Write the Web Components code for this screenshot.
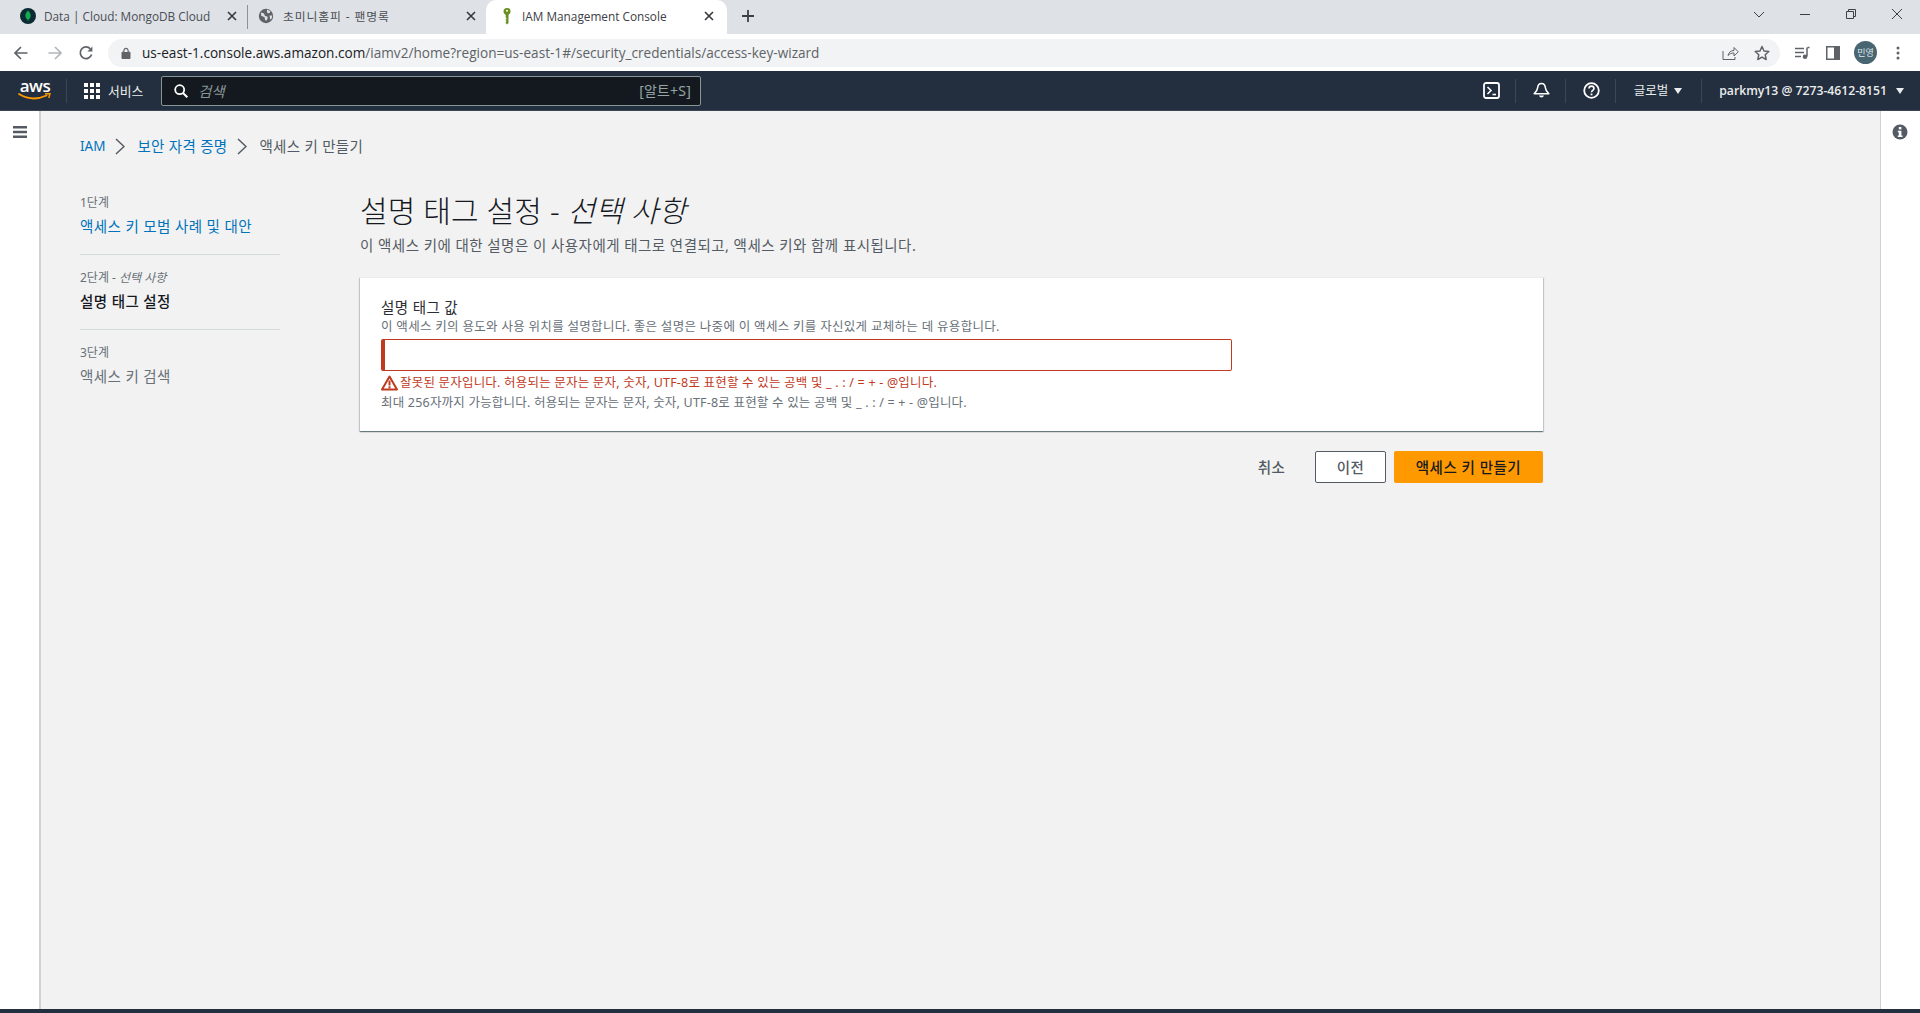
<!DOCTYPE html>
<html lang="ko"><head><meta charset="utf-8"><title>IAM Management Console</title>
<style>
html,body{margin:0;padding:0;height:1013px;overflow:hidden;background:#fff}
body{font-family:"Noto Sans CJK KR","Noto Sans",sans-serif;color:#16191f}
</style></head><body>
<iam-app></iam-app>
<script>
const KR='"Noto Sans","Noto Sans CJK KR",sans-serif';
function def(name,css,html){
  customElements.define(name,class extends HTMLElement{
    constructor(){super();const s=this.attachShadow({mode:'open'});s.innerHTML='<style>'+css+'</style>'+html;}
  });
}
def('browser-tab',`
:host{display:flex;align-items:center;height:34px;box-sizing:border-box;font:11.8px/16px "Open Sans","Noto Sans CJK KR",sans-serif;color:#4a4d52}
:host([active]){background:#fff;border-radius:10px 10px 0 0;color:#3c4043}
.ico{width:18px;height:18px;display:flex;align-items:center;justify-content:center;flex:none}
.t{flex:1;white-space:nowrap;overflow:hidden;margin-left:var(--g,2px)}
.x{flex:none;width:12px;height:12px}
`,`<span class="ico"><slot name="icon"></slot></span><span class="t"><slot></slot></span>
<svg class="x" viewBox="0 0 12 12"><path d="M2 2l8 8M10 2l-8 8" stroke="#33373b" stroke-width="1.6" fill="none"/></svg>`);

def('tab-strip',`
:host{display:flex;align-items:stretch;height:34px;background:#dee1e6}
browser-tab{flex:none}
.sep{width:1px;height:24px;background:#8e9196;align-self:center;flex:none}
.plus{width:16px;height:16px;margin:0 0 2px 13px;align-self:center}
.sp{flex:1}
.win{display:flex;align-items:center;flex:none;padding-bottom:6px}
.win svg{width:12px;height:12px;display:block}
`,`
<browser-tab style="width:247px;padding:0 9px 2px 19px;--g:7px"><svg slot="icon" width="18" height="18" viewBox="0 0 18 18"><circle cx="9" cy="9" r="8" fill="#0b2b33"/><path d="M9 3.4c2 2 2.9 3.8 2.6 5.9-.2 1.500-1.200 2.800-2.300 3.500v1.500h-.6v-1.500C7.500 12.100 6.600 10.800 6.400 9.300 6.100 7.200 7 5.400 9 3.400z" fill="#13aa52"/></svg>Data | Cloud: MongoDB Cloud</browser-tab>
<span class="sep"></span>
<browser-tab style="width:238px;padding:0 9px 2px 9px;--g:8px;letter-spacing:.9px"><svg slot="icon" width="16" height="16" viewBox="0 0 16 16"><circle cx="8" cy="8" r="7.200" fill="#5f6368"/><path d="M3 4.500l3 1 1 2.500 2.400.6.300 2-1.300 2-1.300-.4-.5-3-3.400-1.500zM9 1.500l3.500 1.800-1 1.700-2 .3-.5-1.500zM11.500 7.500h2.800l-.6 3-1.500 1.200z" fill="#dee1e6"/></svg>초미니홈피 - 팬명록</browser-tab>
<browser-tab active style="width:241px;padding:0 12px 2px 12px;--g:6px"><svg slot="icon" width="12" height="18" viewBox="0 0 12 18"><path d="M6 1a3.500 3.500 0 0 1 3.500 3.500c0 1.500-.9 2.700-2 3.200V16L6 17.500 4.700 16v-1.200l1-.8-1-.8v-1l1-.8-1-.8V7.700c-1.200-.5-2.200-1.700-2.200-3.200A3.500 3.500 0 0 1 6 1z" fill="#6c8f21"/><circle cx="6" cy="3.700" r="1" fill="#fff"/></svg>IAM Management Console</browser-tab>
<svg class="plus" viewBox="0 0 16 16"><path d="M8 2v12M2 8h12" stroke="#3c4043" stroke-width="1.800" fill="none"/></svg>
<span class="sp"></span>
<div class="win">
<svg viewBox="0 0 12 12" style="margin-right:34px"><path d="M1 4l5 5 5-5" stroke="#3c4043" fill="none"/></svg>
<svg viewBox="0 0 12 12" style="margin-right:34px"><path d="M1 6.500h10" stroke="#3c4043" fill="none"/></svg>
<svg viewBox="0 0 12 12" style="margin-right:34px"><path d="M1.500 3.500h7v7h-7zM3.500 3.500v-2h7v7h-2" stroke="#3c4043" fill="none"/></svg>
<svg viewBox="0 0 12 12" style="margin-right:17px"><path d="M1 1l10 10M11 1L1 11" stroke="#3c4043" fill="none"/></svg>
</div>`);

def('browser-toolbar',`
:host{display:flex;align-items:center;height:37px;background:#fff;box-sizing:border-box}
svg{display:block;flex:none}
.pill{flex:none;width:1672px;margin-left:14px;height:28px;border-radius:14px;background:#f1f3f4;display:flex;align-items:center;box-sizing:border-box;padding:0 10px 0 13px}
.url{flex:1;margin-left:11px;font:13.6px/18px "Open Sans",sans-serif;color:#202124;white-space:nowrap}
.url span{color:#5f6368}
.av{width:23px;height:23px;border-radius:50%;background:#4a6572;color:#dfe7ea;font:9px/23px "Noto Sans CJK KR",sans-serif;text-align:center;flex:none}
`,`
<svg width="16" height="16" viewBox="0 0 16 16" style="margin-left:13px"><path d="M14.500 8H2M8 2L2 8l6 6" stroke="#5f6368" stroke-width="1.700" fill="none"/></svg>
<svg width="16" height="16" viewBox="0 0 16 16" style="margin-left:18px"><path d="M1.500 8H14M8 2l6 6-6 6" stroke="#b4b6b9" stroke-width="1.700" fill="none"/></svg>
<svg width="16" height="16" viewBox="0 0 16 16" style="margin-left:15px"><path d="M13.600 9.500A5.800 5.800 0 1 1 12.300 3.800" stroke="#5f6368" stroke-width="1.700" fill="none"/><path d="M14.400 1.400v5h-5z" fill="#5f6368"/></svg>
<div class="pill">
<svg width="10" height="12" viewBox="0 0 10 12"><path d="M1 5.200h8V11.500H1zM2.800 5.200V3.400a2.200 2.200 0 0 1 4.400 0v1.800" fill="#5f6368" stroke="#5f6368" stroke-width="1"/><path d="M3.500 5V3.400a1.500 1.500 0 0 1 3 0V5z" fill="#f1f3f4"/></svg>
<span class="url">us-east-1.console.aws.amazon.com<span>/iamv2/home?region=us-east-1#/security_credentials/access-key-wizard</span></span>
<svg width="17" height="16" viewBox="0 0 17 16"><path d="M1 6v8.500h12V12M6 10.500c.6-3 2.800-5 6-5V2.500l4.300 4.300L12 11V8c-2.500 0-4.500.8-6 2.500z" stroke="#5f6368" stroke-width="1" fill="none"/></svg>
<svg width="16" height="16" viewBox="0 0 16 16" style="margin-left:15px"><path d="M8 1.500l2 4.500 4.800.5-3.600 3.200 1 4.800L8 12.100l-4.200 2.400 1-4.800L1.200 6.500 6 6z" stroke="#5f6368" stroke-width="1.500" fill="none" stroke-linejoin="round"/></svg>
</div>
<svg width="16" height="14" viewBox="0 0 16 14" style="margin-left:14px"><path d="M1 2.500h9M1 6.500h9M1 10.500h6" stroke="#5f6368" stroke-width="1.400"/><path d="M13.500 1.500h2M13 1.500v9" stroke="#5f6368" stroke-width="1.500" fill="none"/><circle cx="11" cy="10.800" r="2.300" fill="#5f6368"/></svg>
<svg width="14" height="14" viewBox="0 0 14 14" style="margin-left:16px"><path d="M0 0h14v14H0z" fill="#5f6368"/><path d="M1.500 1.500H8v11H1.500z" fill="#fff"/></svg>
<span class="av" style="margin-left:14px">민영</span>
<svg width="4" height="14" viewBox="0 0 4 14" style="margin-left:19px"><circle cx="2" cy="2" r="1.500" fill="#5f6368"/><circle cx="2" cy="7" r="1.500" fill="#5f6368"/><circle cx="2" cy="12" r="1.500" fill="#5f6368"/></svg>`);

def('nav-divider',`:host{display:block;width:1px;height:24px;background:#3a4656;flex:none}`,``);

def('aws-logo',`
:host{display:flex;flex-direction:column;align-items:center;width:34px;flex:none}
span{font:600 17px/12px "Open Sans",sans-serif;color:#fff;letter-spacing:-.5px;height:12px}
svg{display:block;margin-top:1px}
`,`<span>aws</span><svg width="34" height="8" viewBox="0 0 34 8"><path d="M1 1c5 3 10 4.500 15 4.500 4 0 8-1 12.500-3" stroke="#f90" stroke-width="1.800" fill="none" stroke-linecap="round"/><path d="M27 .8l5-.3-1.200 4.500" stroke="#f90" stroke-width="1.400" fill="none"/></svg>`);

def('aws-nav',`
:host{display:flex;align-items:center;height:40px;background:#232f3e;color:#fff;box-sizing:border-box;border-bottom:1px solid #3b4654;font:12px/16px ${KR}}
svg{display:block;flex:none}
.svc{margin-left:8px;font-size:12.800px;color:#eaeded;white-space:nowrap;width:36px}
.search{flex:none;width:540px;height:30px;box-sizing:border-box;margin-left:17px;background:#14191f;border:1px solid #879596;border-radius:2px;display:flex;align-items:center;padding:0 9px 0 12px}
.ph{margin-left:10px;font-style:italic;color:#879596;font-size:14.500px;flex:1}
.hint{color:#95a5a6;font-size:14px;letter-spacing:.2px}
.sp{flex:1}
.reg{font-size:12.500px;color:#eaeded;white-space:nowrap}
.user{font:600 12.200px/16px "Open Sans","Noto Sans CJK KR",sans-serif;color:#eaeded;white-space:nowrap}
.caret{width:0;height:0;border-left:4px solid transparent;border-right:4px solid transparent;border-top:6px solid #eaeded;flex:none}
`,`
<aws-logo style="margin-left:18px"></aws-logo>
<nav-divider style="margin-left:14px"></nav-divider>
<svg width="16" height="16" viewBox="0 0 16 16" style="margin-left:17px"><g fill="#fff"><rect width="4" height="4"/><rect x="6" width="4" height="4"/><rect x="12" width="4" height="4"/><rect y="6" width="4" height="4"/><rect x="6" y="6" width="4" height="4"/><rect x="12" y="6" width="4" height="4"/><rect y="12" width="4" height="4"/><rect x="6" y="12" width="4" height="4"/><rect x="12" y="12" width="4" height="4"/></g></svg>
<span class="svc">서비스</span>
<div class="search"><svg width="14" height="14" viewBox="0 0 14 14"><circle cx="5.700" cy="5.700" r="4.500" stroke="#fff" stroke-width="1.800" fill="none"/><path d="M9 9l4.300 4.300" stroke="#fff" stroke-width="2"/></svg><span class="ph">검색</span><span class="hint">[알트+S]</span></div>
<span class="sp"></span>
<svg width="17" height="17" viewBox="0 0 17 17"><rect x="1" y="1" width="15" height="15" rx="2" stroke="#fff" stroke-width="1.800" fill="none"/><path d="M4.500 5l3.500 3.500L4.500 12" stroke="#fff" stroke-width="1.600" fill="none"/><path d="M9.500 12.500h3.500" stroke="#fff" stroke-width="1.600"/></svg>
<nav-divider style="margin-left:15px"></nav-divider>
<svg width="17" height="18" viewBox="0 0 17 18" style="margin-left:17px"><path d="M8.500 1.500c2.300 0 3.600 1.800 3.800 4 .2 2.500 1.700 4.500 3.500 6.300H1.200C3 10 4.500 8 4.700 5.500c.2-2.200 1.500-4 3.800-4z" stroke="#fff" stroke-width="1.600" fill="none" stroke-linejoin="round"/><path d="M6 13.500a2.600 2.600 0 0 0 5 0z" fill="#fff"/></svg>
<nav-divider style="margin-left:15px"></nav-divider>
<svg width="17" height="17" viewBox="0 0 17 17" style="margin-left:17px"><circle cx="8.500" cy="8.500" r="7.300" stroke="#fff" stroke-width="1.800" fill="none"/><path d="M6 6.500c0-3.200 5-3.200 5 0 0 2-2.500 1.800-2.500 3.800" stroke="#fff" stroke-width="1.600" fill="none"/><rect x="7.600" y="11.500" width="1.800" height="1.800" fill="#fff"/></svg>
<nav-divider style="margin-left:15px"></nav-divider>
<span class="reg" style="margin-left:18px">글로벌</span><span class="caret" style="margin-left:6px"></span>
<nav-divider style="margin-left:19px"></nav-divider>
<span class="user" style="margin-left:17px">parkmy13 @ 7273-4612-8151</span><span class="caret" style="margin-left:9px;margin-right:16px"></span>`);

def('iam-crumbs',`
:host{display:flex;align-items:center;height:20px;font:14.500px/20px ${KR};letter-spacing:.3px;color:#545b64;white-space:nowrap}
a{color:#0073bb;text-decoration:none}
.iam{font-size:13.500px;letter-spacing:0}
svg{display:block;margin:0 12px 0 10px;flex:none}
`,`<a class="iam">IAM</a><svg width="10" height="17" viewBox="0 0 10 17"><path d="M1 1l8 7.500L1 16" stroke="#545b64" stroke-width="1.500" fill="none"/></svg><a>보안 자격 증명</a><svg width="10" height="17" viewBox="0 0 10 17"><path d="M1 1l8 7.500L1 16" stroke="#545b64" stroke-width="1.500" fill="none"/></svg><span>액세스 키 만들기</span>`);

def('wizard-step',`
:host{display:block;box-sizing:border-box;height:75px;padding-top:4px}
:host(:not([last])) .w{border-bottom:1px solid #d5dbdb}
.w{height:61px;box-sizing:border-box}
.n{font-size:12px;line-height:18px;color:#687078;display:block}
.l{font-size:14.500px;letter-spacing:.4px;line-height:20px;margin-top:4px;display:block;color:#687078;white-space:nowrap}
:host([link]) .l{color:#0073bb}
:host([current]) .l{color:#16191f;font-weight:500}
`,`<div class="w"><span class="n"><slot name="n"></slot></span><span class="l"><slot></slot></span></div>`);

def('wizard-steps',`:host{display:block;width:200px;flex:none;font-family:${KR}}`,`<slot></slot>`);

def('iam-button',`
:host{display:inline-flex;align-items:center;justify-content:center;height:32px;box-sizing:border-box;font:500 14.500px/20px ${KR};letter-spacing:.5px;border-radius:2px;white-space:nowrap;color:#545b64}
:host([variant=normal]){border:1px solid #545b64;background:#fff;width:71px}
:host([variant=primary]){background:#f90;color:#16191f;width:149px}
:host([variant=link]){width:29px}
`,`<slot></slot>`);

def('desc-card',`
:host{display:block;background:#fff;height:154px;box-sizing:border-box;padding:20px 21px 0;font-family:${KR};border-top:1px solid #eaeded;box-shadow:0 1px 1px 0 rgba(0,28,36,.4),1px 1px 1px 0 rgba(0,28,36,.15),-1px 1px 1px 0 rgba(0,28,36,.15)}
.lab{font-size:14.500px;letter-spacing:.4px;line-height:18px;color:#2a2e33}
.d{font-size:12.500px;letter-spacing:.3px;line-height:16px;color:#687078;margin-top:3px;white-space:nowrap}
.inp{width:851px;height:32px;box-sizing:border-box;margin-top:4px;border:1px solid #bf3a1e;border-left:4px solid #bf3a1e;border-radius:2px;background:#fff}
.err{display:flex;align-items:center;font-size:12.500px;letter-spacing:.2px;line-height:16px;color:#bf3a1e;margin-top:4px;white-space:nowrap}
.err svg{margin-right:2px;flex:none}
.note{font-size:12.500px;letter-spacing:.2px;line-height:16px;color:#687078;margin-top:4px;white-space:nowrap}
`,`<div class="lab">설명 태그 값</div>
<div class="d">이 액세스 키의 용도와 사용 위치를 설명합니다. 좋은 설명은 나중에 이 액세스 키를 자신있게 교체하는 데 유용합니다.</div>
<div class="inp"></div>
<div class="err"><svg width="17" height="16" viewBox="0 0 17 16"><path d="M8.500 1.500L16 14.500H1z" fill="#fff" stroke="#bf3a1e" stroke-width="2" stroke-linejoin="round"/><rect x="7.500" y="5.500" width="2" height="5" fill="#bf3a1e"/><rect x="7.500" y="11.300" width="2" height="2" fill="#bf3a1e"/></svg>잘못된 문자입니다. 허용되는 문자는 문자, 숫자, UTF-8로 표현할 수 있는 공백 및 _ . : / = + - @입니다.</div>
<div class="note">최대 256자까지 가능합니다. 허용되는 문자는 문자, 숫자, UTF-8로 표현할 수 있는 공백 및 _ . : / = + - @입니다.</div>`);

def('wizard-panel',`
:host{display:block;width:1183px;flex:none;font-family:${KR}}
h1{margin:0;padding-top:1px;font-size:30px;letter-spacing:.1px;line-height:36px;font-weight:300;color:#16191f;white-space:nowrap}
h1 i{font-style:italic}
p{margin:6px 0 0;font-size:14.500px;letter-spacing:.46px;line-height:20px;color:#545b64;white-space:nowrap}
desc-card{margin-top:22px}
.acts{display:flex;align-items:center;justify-content:flex-end;margin-top:20px}
`,`<h1>설명 태그 설정 - <i>선택 사항</i></h1>
<p>이 액세스 키에 대한 설명은 이 사용자에게 태그로 연결되고, 액세스 키와 함께 표시됩니다.</p>
<desc-card></desc-card>
<div class="acts"><iam-button variant="link">취소</iam-button><iam-button variant="normal" style="margin-left:29px">이전</iam-button><iam-button variant="primary" style="margin-left:8px">액세스 키 만들기</iam-button></div>`);

def('iam-app',`
:host{display:flex;flex-direction:column;height:1013px}
.body{flex:1;display:flex;min-height:0;background:#f2f2f2}
.rail{width:41px;flex:none;background:#fff;border-right:2px solid #d0d2d2;box-sizing:border-box;padding:15px 0 0 13px}
.rrail{width:40px;flex:none;background:#fff;border-left:1px solid #d0d2d2;box-sizing:border-box;padding:13px 0 0 11px}
.main{flex:1;padding:25px 0 0 39px;min-width:0}
.cols{display:flex;gap:80px;margin-top:36px;align-items:flex-start}
wizard-steps{margin-top:-2px}
.foot{height:4px;background:#232f3e;flex:none}
svg{display:block}
`,`<tab-strip></tab-strip><browser-toolbar></browser-toolbar><aws-nav></aws-nav>
<div class="body">
<div class="rail"><svg width="14" height="12" viewBox="0 0 14 12"><path d="M0 0h14v2.400H0zM0 4.800h14v2.400H0zM0 9.600h14V12H0z" fill="#545b64"/></svg></div>
<div class="main"><iam-crumbs></iam-crumbs>
<div class="cols"><wizard-steps>
<wizard-step link><span slot="n">1단계</span>액세스 키 모범 사례 및 대안</wizard-step>
<wizard-step current><span slot="n">2단계 - <i>선택 사항</i></span>설명 태그 설정</wizard-step>
<wizard-step last><span slot="n">3단계</span>액세스 키 검색</wizard-step>
</wizard-steps><wizard-panel></wizard-panel></div></div>
<div class="rrail"><svg width="16" height="16" viewBox="0 0 16 16"><circle cx="8" cy="8" r="7.500" fill="#545b64"/><rect x="6.800" y="3" width="2.600" height="2.400" fill="#fff"/><path d="M5.800 6.800h3.600v4.700h1.100v1.500H5.800v-1.500h1v-3.200h-1z" fill="#fff"/></svg></div>
</div><div class="foot"></div>`);
</script>
</body></html>
